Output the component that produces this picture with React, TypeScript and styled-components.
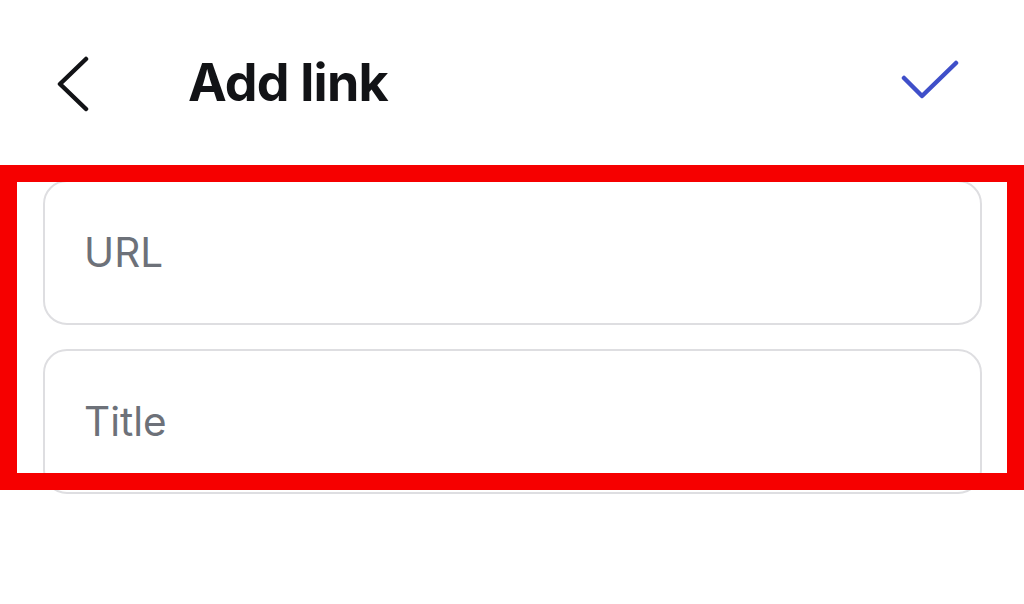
import styled, { createGlobalStyle } from "styled-components";

const GlobalStyle = createGlobalStyle`
  html, body {
    margin: 0;
    padding: 0;
    background: #ffffff;
    font-family: Inter, "Noto Sans", "Liberation Sans", sans-serif;
  }
`;

const App = () => {
  return (
    <Page>
      <GlobalStyle />
      <Header>
        <BackButton aria-label="Back">
          <svg width="34" height="56" viewBox="0 0 34 56" fill="none">
            <path
              d="M30 3 L4 28 L30 53"
              stroke="#121316"
              strokeWidth="4.5"
              strokeLinecap="round"
              strokeLinejoin="round"
            />
          </svg>
        </BackButton>
        <Title>Add link</Title>
        <DoneButton aria-label="Done">
          <svg width="60" height="40" viewBox="0 0 60 40" fill="none">
            <path
              d="M4 18 L22 36 L56 3"
              stroke="#3f4fc9"
              strokeWidth="4.5"
              strokeLinecap="round"
              strokeLinejoin="round"
            />
          </svg>
        </DoneButton>
      </Header>
      <Form>
        <Field placeholder="URL" />
        <Field placeholder="Title" />
      </Form>
      <Highlight />
    </Page>
  );
};

export default App;

// 페이지
const Page = styled.div`
  position: relative;
  width: 1024px;
  height: 604px;
  background: #fff;
  overflow: hidden;
`;

// 상단 바
const Header = styled.div`
  height: 164px;
  display: flex;
  align-items: center;
  padding: 0 64px 0 56px;
  box-sizing: border-box;
`;

const BackButton = styled.button`
  border: 0;
  background: none;
  padding: 0;
  display: flex;
  margin-top: 4px;
`;

const Title = styled.div`
  margin-left: 98px;
  font-size: 52px;
  font-weight: 700;
  color: #121316;
  letter-spacing: -0.8px;
  flex: 1;
`;

const DoneButton = styled.button`
  border: 0;
  background: none;
  padding: 0;
  display: flex;
  margin-top: -4px;
`;

// 입력 폼
const Form = styled.div`
  display: flex;
  flex-direction: column;
  gap: 24px;
  padding: 16px 42px 0 43px;
`;

const Field = styled.input`
  height: 145px;
  border: 2px solid #dedee1;
  border-radius: 24px;
  padding: 0 39px;
  box-sizing: border-box;
  font-family: Inter, "Noto Sans", "Liberation Sans", sans-serif;
  font-size: 40.5px;
  color: #222;
  background: #fff;
  outline: none;

  &::placeholder {
    color: #6d7179;
  }
`;

// 빨간 강조 테두리
const Highlight = styled.div`
  position: absolute;
  left: 0;
  top: 165px;
  width: 1024px;
  height: 325px;
  border: 17px solid #f60000;
  box-sizing: border-box;
  pointer-events: none;
`;
